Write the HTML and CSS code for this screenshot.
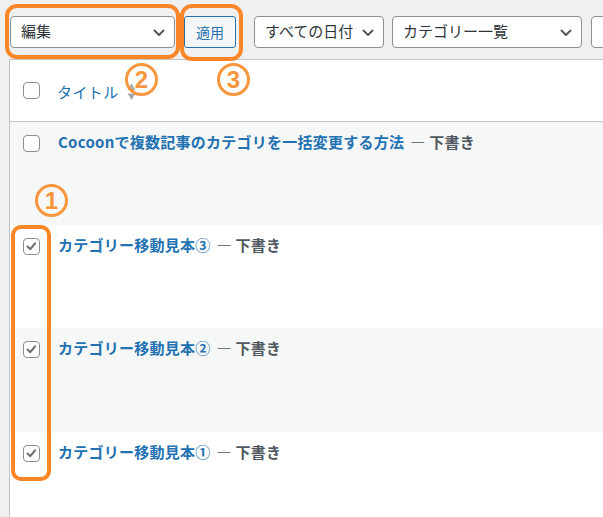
FILE: index.html
```html
<!DOCTYPE html>
<html lang="ja">
<head>
<meta charset="utf-8">
<title>投稿一覧</title>
<link rel="stylesheet" href="styles.css">
</head>
<body>
<div class="page">
  <div class="toolbar">
    <div class="select select-bulk"><span>編集</span><svg class="chev" viewBox="0 0 12 7" width="12" height="7"><polyline points="1,1 6,6 11,1"/></svg></div>
    <div class="button">適用</div>
    <div class="select select-date"><span>すべての日付</span><svg class="chev" viewBox="0 0 12 7" width="12" height="7"><polyline points="1,1 6,6 11,1"/></svg></div>
    <div class="select select-cat"><span>カテゴリー一覧</span><svg class="chev" viewBox="0 0 12 7" width="12" height="7"><polyline points="1,1 6,6 11,1"/></svg></div>
    <div class="select select-more"></div>
  </div>

  <div class="table">
    <div class="row head">
      <div class="cb-col"><span class="cb"></span></div>
      <div class="title-col"><span class="sort-link">タイトル</span><svg class="sort" viewBox="0 0 9 18" width="9" height="18"><polygon points="0.5,7 4.5,0.5 8.5,7"/><polygon points="0.5,10.5 8.5,10.5 4.5,17"/></svg></div>
    </div>
    <div class="row post alt">
      <div class="cb-col"><span class="cb"></span></div>
      <div class="title-col"><span class="post-title">Cocoonで複数記事のカテゴリを一括変更する方法</span><span class="state">— 下書き</span></div>
    </div>
    <div class="row post">
      <div class="cb-col"><span class="cb checked"><svg viewBox="0 0 17 17" width="15" height="15"><polyline points="4,8.5 7.2,11.5 12.5,5"/></svg></span></div>
      <div class="title-col"><span class="post-title">カテゴリー移動見本③</span><span class="state">— 下書き</span></div>
    </div>
    <div class="row post alt tall">
      <div class="cb-col"><span class="cb checked"><svg viewBox="0 0 17 17" width="15" height="15"><polyline points="4,8.5 7.2,11.5 12.5,5"/></svg></span></div>
      <div class="title-col"><span class="post-title">カテゴリー移動見本②</span><span class="state">— 下書き</span></div>
    </div>
    <div class="row post">
      <div class="cb-col"><span class="cb checked"><svg viewBox="0 0 17 17" width="15" height="15"><polyline points="4,8.5 7.2,11.5 12.5,5"/></svg></span></div>
      <div class="title-col"><span class="post-title">カテゴリー移動見本①</span><span class="state">— 下書き</span></div>
    </div>
  </div>

  <div class="frame frame-bulk"></div>
  <div class="frame frame-apply"></div>
  <div class="frame frame-checks"></div>
  <div class="mark mark-1">1</div>
  <div class="mark mark-2">2</div>
  <div class="mark mark-3">3</div>
</div>
</body>
</html>
```

FILE: styles.css
```css
* {
  box-sizing: border-box;
}

html, body {
  margin: 0;
  padding: 0;
  background: #f0f0f1;
  overflow: hidden;
}

body {
  font-family: "Noto Sans CJK JP", "Noto Sans", sans-serif;
  font-size: 15px;
  color: #2c3338;
}

.page {
  position: relative;
  width: 603px;
  height: 517px;
  overflow: hidden;
}

.toolbar {
  display: flex;
  align-items: center;
  height: 59px;
  padding: 16px 0 11px 10px;
  white-space: nowrap;
}

.select {
  flex: none;
  display: flex;
  align-items: center;
  justify-content: space-between;
  height: 32px;
  padding: 0 9px 0 10px;
  background: #fff;
  border: 1px solid #8c8f94;
  border-radius: 4px;
  color: #2c3338;
  line-height: 20px;
}

.select span {
  position: relative;
  top: -1px;
}

.chev {
  flex: none;
  fill: none;
  stroke: #50575e;
  stroke-width: 2;
}

.select-bulk {
  width: 165px;
}

.button {
  flex: none;
  display: flex;
  align-items: center;
  justify-content: center;
  width: 52px;
  height: 32px;
  margin-left: 9px;
  background: #f6f7f7;
  border: 1px solid #2271b1;
  border-radius: 3px;
  color: #2271b1;
  font-size: 14px;
}

.select-date {
  width: 130px;
  margin-left: 18px;
}

.select-cat {
  width: 190px;
  margin-left: 8px;
}

.select-more {
  width: 150px;
  margin-left: 9px;
}

.table {
  margin-left: 9px;
  width: 700px;
  height: 470px;
  background: #fff;
  border-left: 1px solid #c3c4c7;
  border-top: 1px solid #c3c4c7;
}

.row {
  display: flex;
}

.row.head {
  height: 62px;
  align-items: center;
  border-bottom: 1px solid #c3c4c7;
}

.row.post {
  height: 103px;
}

.row.post.tall {
  height: 104px;
}

.row.alt {
  background: #f6f7f7;
}

.cb-col {
  flex: none;
  width: 48px;
  padding-left: 13px;
}

.row.post .cb-col {
  padding-top: 13px;
}

.cb {
  display: flex;
  align-items: center;
  justify-content: center;
  width: 17px;
  height: 17px;
  background: #fff;
  border: 1px solid #8c8f94;
  border-radius: 4px;
}

.cb svg {
  fill: none;
  stroke: #6c7176;
  stroke-width: 2.4;
  stroke-linecap: round;
  stroke-linejoin: round;
}

.title-col {
  display: flex;
  align-items: center;
  white-space: nowrap;
}

.row.head .title-col {
  margin-left: -1px;
  padding-top: 2px;
  letter-spacing: 0.4px;
}

.row.post .title-col {
  align-items: flex-start;
  padding-top: 10px;
  line-height: 20px;
  font-weight: bold;
  letter-spacing: 0.25px;
}

.sort-link {
  color: #2271b1;
}

.sort {
  margin-left: 8px;
  fill: #a7aaad;
}

.post-title {
  color: #2271b1;
}

.state {
  margin-left: 6px;
  color: #50575e;
  white-space: pre;
}

.frame {
  position: absolute;
  border: 4px solid #fa8627;
  border-radius: 12px;
}

.frame-bulk {
  left: 5px;
  top: 4px;
  width: 175px;
  height: 55px;
}

.frame-apply {
  left: 180px;
  top: 4px;
  width: 63px;
  height: 57px;
}

.frame-checks {
  left: 11px;
  top: 225px;
  width: 40px;
  height: 256px;
  border-radius: 10px;
}

.mark {
  position: absolute;
  width: 33px;
  height: 33px;
  border: 3px solid #f7963c;
  border-radius: 50%;
  color: #f7963c;
  font-family: "Liberation Sans", Arial, sans-serif;
  font-weight: bold;
  font-size: 24px;
  line-height: 27px;
  text-align: center;
}

.mark-1 {
  left: 35px;
  top: 184px;
}

.mark-2 {
  left: 125px;
  top: 63px;
}

.mark-3 {
  left: 217px;
  top: 63px;
}
```
